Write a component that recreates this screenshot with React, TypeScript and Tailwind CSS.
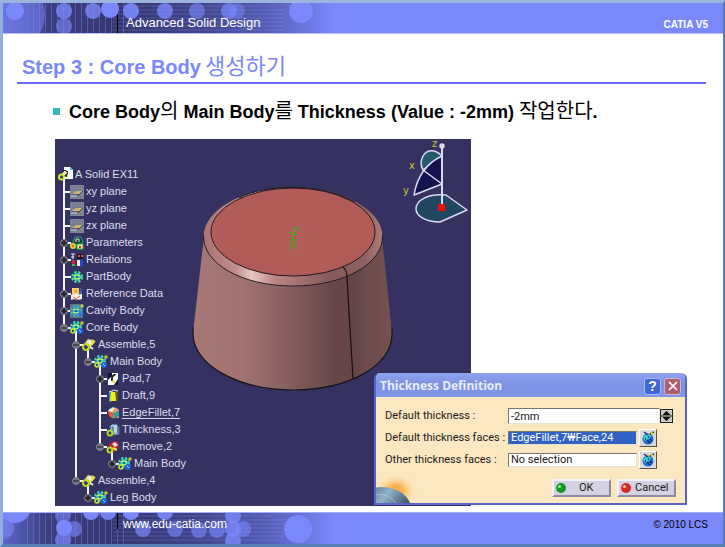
import { useId, type ReactNode } from 'react';
import { X } from 'lucide-react';

type IconName =
  | 'part'
  | 'plane'
  | 'params'
  | 'relations'
  | 'body'
  | 'data'
  | 'cavity'
  | 'core'
  | 'assemble'
  | 'pad'
  | 'draft'
  | 'fillet'
  | 'thickness'
  | 'remove';

interface TreeNode {
  label: string;
  icon: IconName;
  knob?: boolean;
  active?: boolean;
  children?: TreeNode[];
}

const tree: TreeNode[] = [
  { label: 'xy plane', icon: 'plane' },
  { label: 'yz plane', icon: 'plane' },
  { label: 'zx plane', icon: 'plane' },
  { label: 'Parameters', icon: 'params', knob: true },
  { label: 'Relations', icon: 'relations', knob: true },
  { label: 'PartBody', icon: 'body' },
  { label: 'Reference Data', icon: 'data', knob: true },
  { label: 'Cavity Body', icon: 'cavity', knob: true },
  {
    label: 'Core Body',
    icon: 'core',
    children: [
      {
        label: 'Assemble,5',
        icon: 'assemble',
        children: [
          {
            label: 'Main Body',
            icon: 'core',
            children: [
              { label: 'Pad,7', icon: 'pad', knob: true },
              { label: 'Draft,9', icon: 'draft' },
              { label: 'EdgeFillet,7', icon: 'fillet', active: true },
              { label: 'Thickness,3', icon: 'thickness' },
              {
                label: 'Remove,2',
                icon: 'remove',
                children: [{ label: 'Main Body', icon: 'core', knob: true }],
              },
            ],
          },
        ],
      },
      {
        label: 'Assemble,4',
        icon: 'assemble',
        children: [{ label: 'Leg Body', icon: 'core', knob: true }],
      },
    ],
  },
];

function Gear({ fill, cx = 7, cy = 7, r = 4 }: { fill: string; cx?: number; cy?: number; r?: number }) {
  return (
    <>
      <circle cx={cx} cy={cy} r={r} fill="none" stroke={fill} strokeWidth="4" strokeDasharray="2 1.2" />
      <circle cx={cx} cy={cy} r={r - 0.5} fill={fill} />
      <path d={`M${cx - 3} ${cy - 2}l3 1 3-1M${cx - 3} ${cy + 2}l3-1 3 1`} stroke="#dff05a" fill="none" />
      <circle cx={cx} cy={cy} r="1" fill="#1d3a78" />
    </>
  );
}

// 14x14 glyphs of the specification tree
const icons: Record<IconName, ReactNode> = {
  part: (
    <>
      <path d="M6 0h6l3 3v9H6z" fill="#fff" />
      <path d="M12 0v3h3" fill="#36c5dd" />
      <path d="M2 8l4-5 4 1-1 6z" fill="#222" />
      <path d="M3 7l4-4 3 3-4 3z" fill="#e8e8c0" stroke="#333" />
      <circle cx="3.500" cy="10" r="2.500" fill="none" stroke="#d3e22b" strokeWidth="2" />
    </>
  ),
  plane: (
    <>
      <path d="M0 0h14v14H0z" fill="#7f8795" />
      <path d="M0 2h14M0 5h14M0 12h14" stroke="#626984" strokeDasharray="1 1" />
      <path d="M2 9l4-3h7l-3 3z" fill="#c9b36f" />
      <path d="M1 10h8l4-4" stroke="#34364e" fill="none" />
      <path d="M1 11h6" stroke="#d8dce8" />
    </>
  ),
  params: (
    <>
      <path d="M3 6l2-5h6l2 5-2 3H5z" fill="#153c40" stroke="#2ba08f" />
      <path d="M6 6V3h3v3" stroke="#dce9dd" fill="none" />
      <circle cx="3" cy="10" r="3" fill="#dfd22e" />
      <circle cx="3" cy="10" r="1" fill="#e33" />
      <path d="M7 8h6v5H7z" fill="#eee6b0" stroke="#2b3" />
      <path d="M9 10h2v2H9z" fill="#d22" />
    </>
  ),
  relations: (
    <>
      <path d="M1 1h4M3 1v5M1 4h3" stroke="#e7e7ee" fill="none" />
      <path d="M7 1h6v5H7z" fill="#161634" />
      <path d="M8 3h2M11 3h2" stroke="#f44" strokeWidth="2" />
      <path d="M2 7h3v6H2z" fill="#d7272b" />
      <path d="M2 11h3v2H2z" fill="#34c24b" />
      <path d="M7 7h3v6H7z" fill="#f5e9dc" />
      <path d="M10 7h3v6h-3z" fill="#2547cf" />
    </>
  ),
  body: <Gear fill="#43d6a0" />,
  data: (
    <>
      <path d="M2 1h7v6H2z" fill="#f3d37c" />
      <circle cx="6" cy="4" r="2" fill="#f7a53d" />
      <path d="M1 8c3-2 7 0 11-1v5c-4 2-8-1-11 1z" fill="#f5eee2" />
      <path d="M3 10l3 2 4-3" stroke="#d55" fill="none" />
      <path d="M11 1v6M9 5l3 1" stroke="#4e6ff0" />
    </>
  ),
  cavity: (
    <>
      <path d="M0 0h13v14H0z" fill="#5d7387" />
      <Gear fill="#3aaec0" cx={6} />
      <path d="M8 10h5M10 7v6" stroke="#2b76f0" strokeWidth="2" />
      <path d="M12 0v4M10 2h4" stroke="#e4e13c" />
    </>
  ),
  core: (
    <>
      <Gear fill="#3fd3b4" cx={6} cy={6} />
      <circle cx="10" cy="10" r="3" fill="#1e63e6" />
      <path d="M9 9l2 2" stroke="#9fe0ff" />
      <circle cx="3" cy="10" r="2" fill="none" stroke="#c7e02c" strokeWidth="1.500" />
      <path d="M12 0v4M10 2h4" stroke="#f2ee35" />
    </>
  ),
  assemble: (
    <>
      <path d="M3 5l3-4 4 1 1 4-5 3z" fill="#f2ecd2" stroke="#9a8c3f" />
      <path d="M7 9l5-5M10 2l3 2" stroke="#efe03b" strokeWidth="2" />
      <circle cx="4" cy="9" r="3" fill="none" stroke="#b9d92d" strokeWidth="2" />
      <path d="M8 9l3 2" stroke="#eee" strokeWidth="2" />
    </>
  ),
  pad: (
    <>
      <path d="M2 1h10v12H2z" fill="#fff" />
      <path d="M2 1h4v3L2 8zM12 7v6H8z" fill="#11143a" />
      <path d="M6 9V5c1-2 3-2 3-3" stroke="#22242f" strokeWidth="2" fill="none" />
      <path d="M7 8l1 3" stroke="#e4d538" strokeWidth="2" />
    </>
  ),
  draft: (
    <>
      <path d="M3 3l4-2v11l-4 1z" fill="#26a0a0" />
      <path d="M5 3h6l1 9H4z" fill="#f4ec18" />
      <path d="M9 1l3 1v10h-2z" fill="#58602a" />
      <path d="M3 3l5-2 4 1" stroke="#e7eaf0" fill="none" />
    </>
  ),
  fillet: (
    <>
      <path d="M2 5c2-4 8-5 11-1v8H6z" fill="#dba26e" />
      <path d="M2 5c2-3 5-4 7-3l-3 4z" fill="#f6f1cf" />
      <path d="M2 5l5 2v6l-4-3z" fill="#e65a3a" />
      <path d="M7 7l6-2v5l-5 3z" fill="#2da193" />
      <path d="M4 3l4-2" stroke="#5cd1ea" />
    </>
  ),
  thickness: (
    <>
      <path d="M4 3l6-2 3 3v7l-4 1-4-2z" fill="#8fb0cf" stroke="#4d78a8" />
      <path d="M5 3c2-2 3-1 3 1v5M10 2v8" stroke="#e6eef5" fill="none" />
      <path d="M7 4v6M12 3v7" stroke="#24487d" />
      <circle cx="4" cy="10" r="2.500" fill="none" stroke="#a7d632" strokeWidth="2" />
    </>
  ),
  remove: (
    <>
      <path d="M3 5l4-4 5 1 1 5-5 5-4-3z" fill="#c8202c" />
      <path d="M6 4l3-2 3 3-3 2z" fill="#f3e7dd" />
      <path d="M7 8l4 2" stroke="#f2dc44" strokeWidth="2" />
      <circle cx="4" cy="10" r="2.500" fill="none" stroke="#b9d92d" strokeWidth="2" />
    </>
  ),
};

interface TreeItemProps {
  node: TreeNode;
  depth: number;
  last: boolean;
  trail: number[];
}

function TreeItem({ node, depth, last, trail }: TreeItemProps) {
  const x = 9 + depth * 12;
  const nextTrail = last ? trail : [...trail, x];
  const open = Boolean(node.children);

  return (
    <li>
      <div className="flex h-[17px] items-center">
        <svg width={x + 22} height="17" className="shrink-0" aria-hidden="true">
          <g stroke="#f4f4fb" strokeWidth="2">
            {trail.map((t) => (
              <path key={t} d={`M${t} 0v17`} />
            ))}
            <path d={`M${x} 0v${last ? 9 : 17}M${x} 9h7`} />
            {open && <path d={`M${x + 12} 12v5`} />}
          </g>
          {(node.knob || open) && (
            <>
              <circle cx={x} cy="9" r="3.500" fill={open ? '#77777f' : '#4a4a54'} stroke="#85858f" />
              <path d={open ? `M${x - 3} 9h6` : `M${x - 3} 9h6M${x} 6v6`} stroke="#15151c" />
            </>
          )}
          <g transform={`translate(${x + 6} 2)`}>{icons[node.icon]}</g>
        </svg>
        <span className={node.active ? 'underline underline-offset-2 [text-decoration-skip-ink:none]' : ''}>
          {node.label}
        </span>
      </div>
      {node.children && (
        <ul>
          {node.children.map((child, i) => (
            <TreeItem
              key={child.label}
              node={child}
              depth={depth + 1}
              last={i === node.children!.length - 1}
              trail={nextTrail}
            />
          ))}
        </ul>
      )}
    </li>
  );
}

function SpecTree() {
  return (
    <div className="relative pt-[27px] font-['Liberation_Sans',sans-serif] text-[11px] leading-[17px] text-[#dcdcec]">
      <div className="flex h-[17px] items-center">
        <svg width="20" height="17" className="shrink-0" aria-hidden="true">
          <path d="M9 9v8" stroke="#f4f4fb" strokeWidth="2" />
          <g transform="translate(3 1)">{icons.part}</g>
        </svg>
        <span>A Solid EX11</span>
      </div>
      <ul>
        {tree.map((node, i) => (
          <TreeItem key={node.label} node={node} depth={0} last={i === tree.length - 1} trail={[]} />
        ))}
      </ul>
    </div>
  );
}

function Model() {
  return (
    <svg viewBox="0 0 416 367" className="absolute inset-0 h-full w-full overflow-visible" aria-hidden="true">
      <defs>
        <linearGradient id="side" x1="0" x2="1">
          <stop offset="0" stopColor="#a87876" />
          <stop offset="0.25" stopColor="#a07270" />
          <stop offset="0.5" stopColor="#835d5c" />
          <stop offset="0.7" stopColor="#674848" />
          <stop offset="0.8" stopColor="#644646" />
          <stop offset="1" stopColor="#755252" />
        </linearGradient>
        <linearGradient id="rim" x1="0" x2="1">
          <stop offset="0" stopColor="#a87472" />
          <stop offset="0.18" stopColor="#c08e8c" />
          <stop offset="0.27" stopColor="#e8c8c4" />
          <stop offset="0.4" stopColor="#b98583" />
          <stop offset="0.7" stopColor="#855c5b" />
          <stop offset="0.9" stopColor="#8d6261" />
          <stop offset="1" stopColor="#b07c7a" />
        </linearGradient>
      </defs>
      <path
        d="M149 98L138 194C139 226 182 251 238 251C294 251 336 227 337 194L327 98Z"
        fill="url(#side)"
      />
      <path
        d="M138 188v8C140 227 184 251 238 251C294 251 336 227 337 196v-8"
        fill="none"
        stroke="#17151c"
        strokeWidth="1.200"
      />
      <ellipse cx="238" cy="98" rx="89.500" ry="49.500" fill="url(#rim)" />
      <path d="M148.500 96C147 124 186 147 238 147S329 124 327.500 96" fill="none" stroke="#221a1e" />
      <path d="M184 59C198 51 218 48.500 238 48.500S282 53 300 63" fill="none" stroke="#221a1e" />
      <ellipse cx="238" cy="93" rx="82" ry="44" fill="#b25c5a" stroke="#221a1e" />
      <path d="M288 128q4 3 4 11L298 240" fill="none" stroke="#151116" strokeWidth="1.200" />
      <text x="233" y="96" fontSize="11" fill="#17c217" fontFamily="Liberation Sans, sans-serif">
        -2
      </text>
      <path d="M235 110l3-12 3 12" fill="none" stroke="#17c217" />

      {/* compass */}
      <g stroke="#dcd8f6" strokeWidth="1.500" strokeLinejoin="round">
        <path d="M387 17C380 10 372 10 368 17C366 21 365 26 368 31z" fill="#245a6b" />
        <path d="M387 17C372 24 362 38 359 56L387 45z" fill="#15134f" />
        <path d="M368 31L387 45" />
        <path d="M391 56C374 54 361 61 361 70C361 77 371 83 385 83L412 71z" fill="#20475f" />
        <path d="M387 7v58" strokeWidth="2" />
        <circle cx="387" cy="7" r="2" fill="#dcd8f6" />
      </g>
      <path d="M383 65h7v7h-7z" fill="#ea1010" />
      <g fontSize="10" fill="#c8c637" fontFamily="DejaVu Sans, sans-serif">
        <text x="377" y="8">
          z
        </text>
        <text x="354" y="30">
          x
        </text>
        <text x="348" y="55">
          y
        </text>
      </g>
    </svg>
  );
}

function PickButton({ label }: { label: string }) {
  return (
    <button
      type="button"
      aria-label={label}
      className="flex size-[18px] items-center justify-center border border-t-white border-r-[#55524c] border-b-[#55524c] border-l-white bg-[#dcd9da]"
    >
      <svg width="14" height="14" viewBox="0 0 14 14">
        <circle cx="7" cy="8" r="5.500" fill="#1b6fd8" />
        <path d="M2 7c1-4 6-5 8-2L8 8 4 10z" fill="#35cbd0" />
        <path d="M6 9l3 3M9 8l2 2M4 8h1M7 6h1" stroke="#0b2468" strokeWidth="1.500" />
        <path d="M3 1l4 3M9 3l4-2" stroke="#1a3160" strokeWidth="1.500" />
        <path d="M10 1l2 3" stroke="#f1d72d" strokeWidth="2" />
      </svg>
    </button>
  );
}

const bevel =
  'flex h-[18px] items-center border-2 border-t-[#f4f2fb] border-r-[#8d8b9c] border-b-[#8d8b9c] border-l-[#f4f2fb] bg-[#d3d1e2]';
const field =
  'min-w-0 border border-t-[#77756e] border-r-[#e9e2d0] border-b-[#e9e2d0] border-l-[#77756e] px-0.5 outline-none';

function ThicknessDialog() {
  const id = useId();

  return (
    <section
      role="dialog"
      aria-label="Thickness Definition"
      className="absolute top-[234px] left-[319px] w-[313px] overflow-hidden rounded-t-md border-2 border-t-0 border-[#5b62cc] bg-[#fbe8c0] font-['Roboto',sans-serif] text-[11px] leading-[14px] text-[#1d1a18]"
    >
      <header className="-mx-0.5 flex h-6 items-center gap-[3px] bg-linear-to-b from-[#8ea4f0] via-[#7c92e2] to-[#7f96e6] px-1.5 pt-0.5">
        <h2 className="flex-1 font-['Open_Sans',sans-serif] text-[12px] font-bold text-[#e9edfd]">
          Thickness Definition
        </h2>
        <button
          type="button"
          aria-label="Help"
          className="size-[17px] rounded-[3px] border border-[#a9bcf8] bg-[#3f66dc] text-center font-['Liberation_Sans',sans-serif] text-[14px] leading-[15px] font-bold text-white"
        >
          ?
        </button>
        <button
          type="button"
          aria-label="Close"
          className="flex size-[17px] items-center justify-center rounded-[3px] border border-[#c9b4d2] bg-[#ad5e70] text-white"
        >
          <X size={14} strokeWidth={3} />
        </button>
      </header>

      <form className="relative px-[9px] pt-2 pb-1.5" onSubmit={(e) => e.preventDefault()}>
        <div className="flex h-[22px] items-center">
          <label htmlFor={`${id}-value`} className="w-[123px]">
            Default thickness :
          </label>
          <input id={`${id}-value`} defaultValue="-2mm" className={`${field} h-4 w-[152px] bg-white`} />
          <button type="button" aria-label="Change value" className="h-[14px] w-[13px] border border-[#222] bg-[#cfccc4]">
            <svg viewBox="0 0 11 12" className="h-full w-full">
              <path d="M5.500 1l4 4h-8zM5.500 11l4-4h-8z" fill="#000" />
              <path d="M0 6h11" stroke="#222" />
            </svg>
          </button>
        </div>
        <div className="flex h-[22px] items-center">
          <label htmlFor={`${id}-faces`} className="w-[123px]">
            Default thickness faces :
          </label>
          <input
            id={`${id}-faces`}
            readOnly
            defaultValue="EdgeFillet,7₩Face,24"
            className={`${field} mr-0.5 h-[14px] w-[129px] bg-[#2f62c4] text-white`}
          />
          <PickButton label="Edit default faces" />
        </div>
        <div className="flex h-[22px] items-center">
          <label htmlFor={`${id}-other`} className="w-[123px]">
            Other thickness faces :
          </label>
          <input
            id={`${id}-other`}
            readOnly
            defaultValue="No selection"
            className={`${field} mr-0.5 h-[14px] w-[129px] bg-white`}
          />
          <PickButton label="Edit other faces" />
        </div>
        <svg width="44" height="32" className="absolute bottom-0 left-0" aria-hidden="true">
          <defs>
            <radialGradient id="glow">
              <stop offset="0.3" stopColor="#f9b04a" />
              <stop offset="1" stopColor="#fbe8c0" stopOpacity="0" />
            </radialGradient>
            <linearGradient id="planet" x1="0" x2="1" y2="0.6">
              <stop offset="0" stopColor="#2d4a5c" />
              <stop offset="0.5" stopColor="#8fb3c9" />
              <stop offset="1" stopColor="#22333c" />
            </linearGradient>
          </defs>
          <ellipse cx="20" cy="20" rx="22" ry="18" fill="url(#glow)" />
          <ellipse cx="6" cy="38" rx="29" ry="22" fill="url(#planet)" />
          <path d="M0 24q12-3 20 8" stroke="#c5dbe6" fill="none" opacity="0.5" />
        </svg>
        <div className="mt-2 flex justify-end gap-1.5">
          <button type="submit" className={`${bevel} w-[59px] gap-[13px] px-0.5`}>
            <svg width="10" height="10" viewBox="0 0 10 10">
              <circle cx="5" cy="5" r="5" fill="#149a22" />
              <circle cx="3.500" cy="3.500" r="1.500" fill="#a5f0a0" />
            </svg>
            OK
          </button>
          <button type="button" className={`${bevel} w-[59px] gap-1 px-0.5`}>
            <svg width="10" height="10" viewBox="0 0 10 10">
              <circle cx="5" cy="5" r="5" fill="#d22a1c" />
              <circle cx="3.500" cy="3.500" r="1.500" fill="#ffc0b0" />
            </svg>
            Cancel
          </button>
        </div>
      </form>
    </section>
  );
}

type Dot = [x: number, y: number, r: number, opacity: number];

const topDots: Dot[] = [
  [8, 12, 34, 0.5],
  [12, 8, 9, 1],
  [61, 8, 8, 0.8],
  [61, 23, 8, 0.6],
  [90, 8, 8, 0.8],
  [107, 6, 9, 1],
  [128, 8, 8, 0.9],
  [162, 8, 8, 0.8],
  [194, 8, 8, 0.6],
  [226, 8, 8, 0.7],
  [234, 8, 8, 0.5],
  [298, 8, 12, 1],
];

const bottomDots: Dot[] = [
  [12, -6, 16, 1],
  [0, 15, 11, 0.6],
  [60, 2, 8, 0.6],
  [61, 15, 8, 1],
  [60, 27, 8, 0.7],
  [71, 16, 8, 0.6],
  [88, -1, 8, 1],
  [105, -1, 8, 0.9],
  [128, -1, 8, 1],
  [140, 16, 8, 0.7],
  [162, -1, 8, 0.9],
  [172, 16, 8, 0.6],
  [196, 17, 8, 0.6],
  [214, 17, 8, 0.6],
  [230, 3, 8, 0.8],
  [230, 16, 8, 0.8],
  [230, 28, 8, 0.8],
  [240, 16, 8, 0.6],
  [295, 16, 14, 1],
];

function BannerArt({ id, dots }: { id: string; dots: Dot[] }) {
  return (
    <svg width="330" height="32" className="absolute top-0 left-0" aria-hidden="true">
      <defs>
        <linearGradient id={id} x1="0" x2="1">
          <stop offset="0" stopColor="#5c66c8" />
          <stop offset="0.13" stopColor="#3d4080" />
          <stop offset="0.35" stopColor="#34366e" />
          <stop offset="0.6" stopColor="#41458a" />
          <stop offset="0.8" stopColor="#565eb5" />
          <stop offset="1" stopColor="#7a88fb" />
        </linearGradient>
      </defs>
      <path d="M0 0h330v32H0z" fill={`url(#${id})`} />
      <path d="M24 16h98" stroke="#7a88fb" strokeWidth="32" strokeDasharray="1 5" opacity="0.4" />
      <path
        d="M110 3h160M110 7h170M110 11h170M110 15h170M110 19h170M110 23h170M110 27h170"
        stroke="#8894ff"
        opacity="0.3"
      />
      {dots.map(([cx, cy, r, opacity]) => (
        <circle key={`${cx}-${cy}`} cx={cx} cy={cy} r={r} fill="#7a88fb" opacity={opacity} />
      ))}
    </svg>
  );
}

export default function App() {
  return (
    <div className="flex min-h-screen flex-col border-t-3 border-r-2 border-b-3 border-l-3 border-t-[#9ab4dc] border-r-[#5a7ba8] border-b-[#587fb8] border-l-[#8fb0dc] bg-white font-['Liberation_Sans','Noto_Sans_CJK_KR',sans-serif]">
      <header className="relative flex h-[31px] items-stretch justify-between overflow-hidden border-b border-[#b9c1fc] bg-[#7a88fb] text-white">
        <BannerArt id="top-fade" dots={topDots} />
        <div className="relative ml-[114px] flex items-end">
          <span className="h-[19px] w-px bg-black" />
          <p className="pl-2 text-[13px] leading-5">Advanced Solid Design</p>
        </div>
        <p className="relative self-end pr-[15px] text-[10px] leading-[17px] font-bold">CATIA V5</p>
      </header>

      <main className="flex-1 pr-[17px] pl-[14px]">
        <h1 className="mt-[18px] flex h-8 items-center gap-1 border-b-2 border-[#6a66fa] pl-[5px] text-[20px] leading-7 font-bold text-[#7a88fb]">
          Step 3 : Core Body
          <span className="text-[22px] font-normal">생성하기</span>
        </h1>
        <div className="mt-[13px] flex h-7 items-center pl-9">
          <span className="size-[7px] bg-[#38b5bb]" />
          <p className="pl-[9px] text-[18px] leading-7 font-bold whitespace-nowrap text-black">
            Core Body<span className="text-[20px] font-normal">의</span> Main Body
            <span className="text-[20px] font-normal">를</span> Thickness (Value : -2mm){' '}
            <span className="text-[20px] font-normal">작업한다</span>.
          </p>
        </div>
        <div className="relative mt-[14px] mb-1.5 ml-[38px] h-[367px] w-[416px] bg-[#353261]">
          <Model />
          <SpecTree />
          <ThicknessDialog />
        </div>
      </main>

      <footer className="relative flex h-8 justify-between overflow-hidden border-t border-[#a3adfc] bg-[#7a88fb]">
        <BannerArt id="bottom-fade" dots={bottomDots} />
        <div className="relative ml-[114px] flex">
          <span className="h-4 w-px bg-black" />
          <a href="#home" className="pl-[5px] text-[12px] leading-[22px] text-white">
            www.edu-catia.com
          </a>
        </div>
        <p className="relative pr-[15px] text-[10px] leading-[23px] text-black">© 2010 LCS</p>
      </footer>
    </div>
  );
}
